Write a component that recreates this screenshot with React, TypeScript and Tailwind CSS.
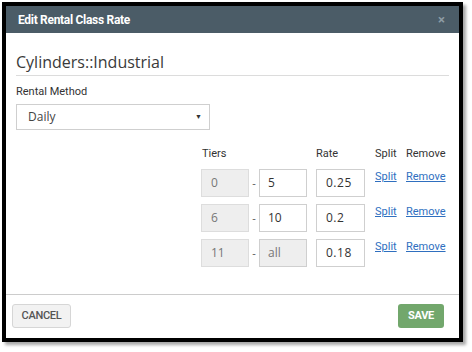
import React from "react";

const rows = [
  { from: "0", to: "5", toEditable: true, rate: "0.25" },
  { from: "6", to: "10", toEditable: true, rate: "0.2" },
  { from: "11", to: "all", toEditable: false, rate: "0.18" },
];

export default function App() {
  return (
    <div className="w-[472px] h-[352px] bg-white pl-[2px] pt-[2px]" style={{ fontFamily: "Roboto, 'Open Sans', sans-serif" }}>
      <div className="w-[461px] h-[340px] border-4 border-black bg-white flex flex-col shadow-[3px_3px_3px_rgba(0,0,0,0.35)]">
        {/* header */}
        <div className="h-[27px] bg-[#4b5c67] flex items-center justify-between pl-[12px] pr-[14px]">
          <span className="text-white text-[12px] font-bold tracking-[-0.3px]">Edit Rental Class Rate</span>
          <span className="text-[#8e9ca5] text-[13px] font-bold leading-none">×</span>
        </div>
        {/* body */}
        <div className="flex-1 px-[10px]">
          <div className="mt-[17px] h-[26px] border-b border-[#dcdcdc] text-[16px] font-normal leading-[24px] text-[#3a3a3a]" style={{ fontFamily: "'Open Sans', sans-serif" }}>
            Cylinders::Industrial
          </div>
          <div className="mt-[8px] text-[11px] leading-[16px] text-[#333]">Rental Method</div>
          <div className="mt-[4px] w-[194px] h-[26px] border border-[#cfcfcf] flex items-center justify-between pl-[11px] pr-[7px]">
            <span className="text-[12px] text-[#444]" style={{ fontFamily: "'Open Sans', sans-serif" }}>Daily</span>
            <span className="text-[7px] text-[#333]">▼</span>
          </div>
          <div className="ml-[185px] mt-[16px]">
            <div className="flex text-[11px] leading-[16px] text-[#333]">
              <span className="w-[115px] pl-[1px]">Tiers</span>
              <span className="w-[59px]">Rate</span>
              <span className="w-[31px]">Split</span>
              <span>Remove</span>
            </div>
            <div className="mt-[7px] flex flex-col gap-[7px]">
              {rows.map((r, i) => (
                <div key={i} className="flex items-start h-[28px]" style={{ fontFamily: "'Open Sans', sans-serif" }}>
                  <div className="w-[48px] h-[28px] bg-[#eeeeee] border border-[#dddddd] flex items-center pl-[9px] text-[12px] text-[#777]">{r.from}</div>
                  <div className="w-[10px] h-[28px] flex items-center justify-center text-[11px] text-[#555]">-</div>
                  <div className={`w-[48px] h-[28px] border border-[#cfcfcf] flex items-center pl-[8px] text-[12px] ${r.toEditable ? "bg-white text-[#333]" : "bg-[#eeeeee] text-[#777]"}`}>{r.to}</div>
                  <div className="ml-[9px] w-[49px] h-[28px] border border-[#cfcfcf] bg-white flex items-center pl-[9px] text-[12px] text-[#333] tracking-[0.5px]">{r.rate}</div>
                  <div className="ml-[10px] w-[31px] text-[11px] leading-[16px] text-[#2f6fbf] underline" style={{ fontFamily: "Roboto, sans-serif" }}>Split</div>
                  <div className="text-[11px] leading-[16px] text-[#2f6fbf] underline" style={{ fontFamily: "Roboto, sans-serif" }}>Remove</div>
                </div>
              ))}
            </div>
          </div>
        </div>
        {/* footer */}
        <div className="h-[44px] border-t border-[#cccccc] flex items-start justify-between pl-[6px] pr-[15px] pt-[9px]">
          <button className="w-[59px] h-[24px] bg-[#f2f2f2] border border-[#d6d6d6] rounded-[3px] text-[11px] font-medium text-[#555] tracking-[-0.3px]">CANCEL</button>
          <button className="w-[46px] h-[24px] bg-[#72a76c] rounded-[3px] text-[11px] font-bold text-white tracking-[-0.3px]">SAVE</button>
        </div>
      </div>
    </div>
  );
}
